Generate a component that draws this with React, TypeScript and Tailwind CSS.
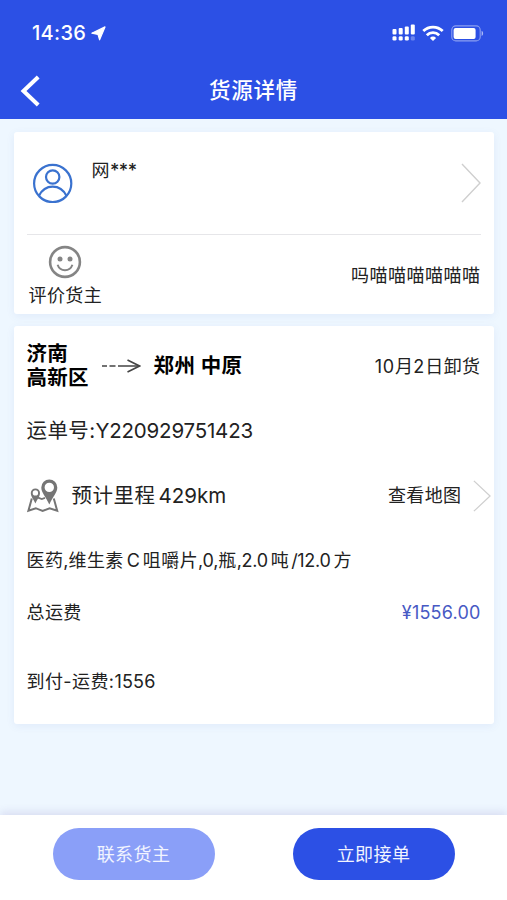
import type { ReactNode } from "react";

function StatusBar() {
  return (
    <div className="flex h-[66px] items-center justify-between pl-8 pr-[23px]">
      <div className="flex items-center gap-[5px]">
        <span className="text-[20px] font-medium leading-none tracking-[0.3px]">
          14:36
        </span>
        <svg className="h-[15px] w-[15px]" viewBox="0 0 15 15" fill="currentColor">
          <path
            d="M14 0.9 8.6 13.8 7 8.4 0.8 7.2Z"
            stroke="currentColor"
            strokeWidth="1.2"
            strokeLinejoin="round"
          />
        </svg>
      </div>

      <div className="flex items-center">
        <svg className="h-[18px] w-[24px]" viewBox="0 0 24 18" fill="currentColor">
          <rect x="0.5" y="5" width="4" height="5.4" rx="1" />
          <rect x="6.7" y="4" width="4" height="6.4" rx="1" />
          <rect x="12.8" y="2.4" width="4" height="8" rx="1" />
          <rect x="18.8" y="0.6" width="4" height="9.8" rx="1" />
          <rect x="0.5" y="12.2" width="4" height="4.4" rx="1.4" />
          <rect x="6.7" y="12.2" width="4" height="4.4" rx="1.4" />
          <rect x="12.8" y="12.2" width="4" height="4.4" rx="1.4" />
          <rect x="18.8" y="12.2" width="4" height="4.4" rx="1.4" opacity="0.3" />
        </svg>
        <svg
          className="ml-[6px] h-[17px] w-[22px]"
          viewBox="0 0 22 17"
          fill="none"
          stroke="currentColor"
          strokeWidth="2.8"
        >
          <path d="M1.3 6A14 14 0 0 1 20.7 6" />
          <path d="M4.8 10.2A8.7 8.7 0 0 1 17.2 10.2" />
          <path
            d="M11 16 7.9 12.9A4.4 4.4 0 0 1 14.1 12.9Z"
            fill="currentColor"
            stroke="none"
          />
        </svg>
        <svg className="ml-[7px] h-[17px] w-[33px]" viewBox="0 0 33 17">
          <rect
            x="0.8"
            y="0.9"
            width="28.4"
            height="15"
            rx="4"
            fill="none"
            stroke="white"
            strokeOpacity="0.45"
            strokeWidth="1.1"
          />
          <rect x="2.6" y="2.9" width="22" height="11" rx="2" fill="white" />
          <path d="M30.6 5.8c2 .9 2 4.3 0 5.2Z" fill="white" fillOpacity="0.6" />
        </svg>
      </div>
    </div>
  );
}

function Header() {
  return (
    <header className="h-[119px] bg-[#2c50e5] text-white">
      <StatusBar />
      <div className="grid h-[49px] grid-cols-3 items-center px-5">
        <svg
          className="h-[32px] w-[22px]"
          viewBox="0 0 22 32"
          fill="none"
          stroke="currentColor"
          strokeWidth="4"
        >
          <path d="M18.2 2 3.5 16 18.2 30" />
        </svg>
        <h1 className="text-center text-[21.5px] font-medium tracking-[0.7px]">
          货源详情
        </h1>
      </div>
    </header>
  );
}

function UserIcon() {
  return (
    <svg
      className="h-10 w-10"
      viewBox="0 0 40 40"
      fill="none"
      stroke="#3a72cf"
      strokeWidth="2.2"
    >
      <circle cx="19.7" cy="20.5" r="18.6" />
      <circle cx="19.7" cy="14" r="6.7" />
      <path d="M6 32.8C8.8 27 13.7 23.6 19.7 23.6S30.6 27 33.4 32.8" />
    </svg>
  );
}

function SmileIcon() {
  return (
    <svg
      className="h-[34px] w-[34px]"
      viewBox="0 0 34 34"
      fill="none"
      stroke="#858585"
      strokeWidth="2.6"
    >
      <circle cx="17" cy="17" r="14.9" />
      <circle cx="12" cy="14" r="2.5" fill="#858585" stroke="none" />
      <circle cx="22" cy="14" r="2.5" fill="#858585" stroke="none" />
      <path d="M9.6 19.8C12 27 22 27 24.4 19.8" strokeWidth="2" />
    </svg>
  );
}

function MapIcon() {
  return (
    <svg className="h-[34px] w-8" viewBox="0 0 32 34" fill="none" stroke="#757575">
      <path
        d="M4.8 19.6 1.4 31.8 8.8 29.2 15.6 32 22.6 29.2 30.2 31.8 26.8 19.6"
        strokeWidth="2"
      />
      <path d="M11 18.6 14.8 20 18 18.8" strokeWidth="1.8" />
      <path
        fillRule="evenodd"
        clipRule="evenodd"
        fill="#757575"
        stroke="none"
        d="M8.4 24.5C6.6 20 3.8 17.6 3.8 14a4.6 4.6 0 0 1 9.2 0c0 3.6-2.8 6-4.6 10.5ZM8.4 11.2a2.7 2.7 0 1 0 0 5.4 2.7 2.7 0 0 0 0-5.4Z"
      />
      <path
        fillRule="evenodd"
        clipRule="evenodd"
        fill="#757575"
        stroke="none"
        d="M22.3 25.4C18.8 17.6 14.3 13.6 14.3 8.4a8 8 0 0 1 16 0c0 5.2-4.5 9.2-8 17ZM22.3 3.7a4.7 4.7 0 1 0 0 9.4 4.7 4.7 0 0 0 0-9.4Z"
      />
    </svg>
  );
}

function DashedArrow() {
  return (
    <svg
      className="h-[14px] w-[40px]"
      viewBox="0 0 40 14"
      fill="none"
      stroke="#444"
      strokeWidth="1.6"
    >
      <path d="M1 7h5M8.5 7h6M17 7h21.5" />
      <path d="M26.5 1 38.5 7 26.5 13" />
    </svg>
  );
}

function Chevron({ className }: { className: string }) {
  return (
    <svg
      className={className}
      viewBox="0 0 20 40"
      preserveAspectRatio="none"
      fill="none"
      stroke="#cfcfcf"
      strokeWidth="1.4"
    >
      <path d="M1 1 19 20 1 39" />
    </svg>
  );
}

function Card({ children }: { children: ReactNode }) {
  return (
    <section className="rounded-[3px] bg-white shadow-[0_2px_8px_rgba(70,90,190,0.08)]">
      {children}
    </section>
  );
}

function OwnerCard() {
  return (
    <Card>
      <div className="mx-[13px] flex h-[103px] items-center border-b border-[#e6e6e9] pl-[6px]">
        <UserIcon />
        <p className="ml-[19px] mt-[14px] self-start pt-3 leading-[26px]">
          网<span className="font-medium tracking-[-0.5px]">***</span>
        </p>
        <Chevron className="ml-auto h-10 w-5" />
      </div>
      <div className="flex h-[79px] items-center justify-between pl-[15px] pr-[13px]">
        <div className="flex flex-col items-center pt-[3px]">
          <SmileIcon />
          <span className="mt-[5px] leading-6">评价货主</span>
        </div>
        <span className="pt-[2px] tracking-[0.5px]">吗喵喵喵喵喵喵</span>
      </div>
    </Card>
  );
}

function OrderCard() {
  return (
    <Card>
      <div className="flex h-20 items-center pl-[13px] pr-[13px]">
        <div className="text-[20.5px] font-bold leading-6 tracking-[0.2px] text-black">
          <p>济南</p>
          <p>高新区</p>
        </div>
        <div className="ml-3">
          <DashedArrow />
        </div>
        <p className="ml-[13px] text-[20.5px] font-bold tracking-[0.4px] text-black">
          郑州 中原
        </p>
        <p className="ml-auto">
          <span className="tracking-[0.8px]">10</span>月
          <span className="tracking-[1px]">2</span>日卸货
        </p>
      </div>

      <p className="flex h-[50px] items-center px-[13px] text-[20.5px] tracking-[0.4px]">
        运单号:<span className="tracking-[-0.2px]">Y220929751423</span>
      </p>

      <div className="flex h-[79px] items-center pl-[13px] pr-[3px]">
        <MapIcon />
        <p className="ml-[13px] pt-[2px] text-[20.5px] tracking-[0.5px]">
          预计里程
          <span className="ml-[3px] tracking-[0px]">429km</span>
        </p>
        <span className="ml-auto">查看地图</span>
        <Chevron className="ml-[11px] h-8 w-[18px]" />
      </div>

      <p className="flex h-[50px] items-center px-[13px] pt-px">
        医药
        <span className="tracking-[0px]">,</span>
        维生素
        <span className="mx-[3px] tracking-[0px]">C</span>
        咀嚼片
        <span className="tracking-[-0.2px]">,0,</span>
        瓶
        <span className="tracking-[-0.3px]">,2.0</span>
        <span className="ml-[3px]">吨</span>
        <span className="ml-[2px] tracking-[-0.3px]">/12.0</span>
        <span className="ml-[3px]">方</span>
      </p>

      <div className="flex h-[54px] items-center justify-between px-[13px]">
        <span className="pt-px">总运费</span>
        <span className="text-[18px] tracking-[0.2px] text-[#4759c4]">
          ¥1556.00
        </span>
      </div>

      <p className="flex h-[85px] items-center px-[13px]">
        到付-运费:<span className="tracking-[0.2px]">1556</span>
      </p>
    </Card>
  );
}

function ActionBar() {
  return (
    <footer className="flex h-[85px] justify-between bg-white pl-[53px] pr-[52px] pt-[13px] text-[#f1f4ff] shadow-[0_-3px_8px_rgba(90,70,160,0.14)]">
      <button className="h-[52px] w-[162px] rounded-full bg-[#8a9ff8] pt-px pr-px tracking-[0.4px]">
        联系货主
      </button>
      <button className="h-[52px] w-[162px] rounded-full bg-[#2c50e5] pt-px pr-px tracking-[0.4px]">
        立即接单
      </button>
    </footer>
  );
}

export default function App() {
  return (
    <div className="flex h-[900px] w-[507px] flex-col overflow-hidden bg-[#eef7ff] font-['Inter','Noto_Sans_CJK_SC',sans-serif] text-[18px] tracking-[0.4px] text-[#222]">
      <Header />
      <main className="flex flex-1 flex-col gap-3 px-[13.5px] pt-[13px]">
        <OwnerCard />
        <OrderCard />
      </main>
      <ActionBar />
    </div>
  );
}
